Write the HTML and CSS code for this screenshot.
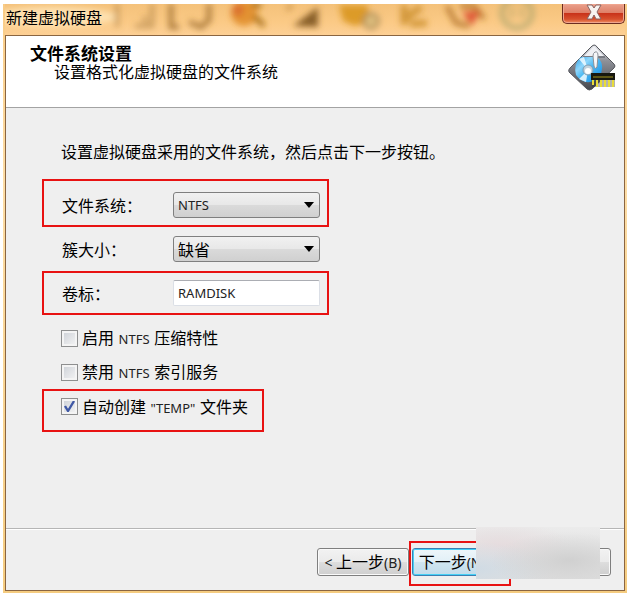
FILE: index.html
```html
<!DOCTYPE html>
<html lang="zh-CN">
<head>
<meta charset="utf-8">
<title>新建虚拟硬盘</title>
<link rel="stylesheet" href="styles.css">
</head>
<body>
<main class="window">
  <header class="titlebar">
    <svg class="glass" width="540" height="31" viewBox="0 0 540 31" aria-hidden="true">
      <defs><filter id="soft" x="-10%" y="-50%" width="120%" height="200%"><feGaussianBlur stdDeviation="3"/></filter></defs>
      <g filter="url(#soft)" fill="none">
        <ellipse cx="47" cy="13" rx="64" ry="10" fill="#ffe8bd" opacity=".8"/>
        <path d="M112 0V23M140 19V12M147 0V22H130" stroke="#a2763d" stroke-width="4" opacity=".6"/>
        <path d="M166 0V23H174M204 0V16L196 23L184 18" stroke="#95652a" stroke-width="5" opacity=".75"/>
        <circle cx="239" cy="9" r="13" fill="#df8a26" opacity=".85"/><circle cx="233" cy="6" r="6" fill="#d65a29" opacity=".6"/>
        <path d="M249 12L259 22M247 0L256 2" stroke="#a66d17" stroke-width="5"/>
        <path d="M288 22L313 3V23Z" fill="#825a22" opacity=".95"/><path d="M282 6L287 1" stroke="#b98239" stroke-width="3"/>
        <path d="M334 1H363V18L350 22L338 17Z" fill="#d99620" opacity=".9"/><circle cx="366" cy="17" r="7" fill="#e3c280" stroke="#a48552" stroke-width="3"/>
        <path d="M399 1V21M400 15L416 3M405 20L422 19" stroke="#c58823" stroke-width="7" opacity=".75"/>
        <path d="M442 2L451 19L464 22M455 2H469L479 15" stroke="#ad6b22" stroke-width="5" opacity=".8"/><path d="M457 8L475 7L467 22Z" fill="#db4a2d" opacity=".9"/>
        <circle cx="512" cy="9" r="15" stroke="#a8a26b" stroke-width="5" opacity=".7"/><path d="M507 3V14M517 3V14" stroke="#a8a26b" stroke-width="3" opacity=".7"/>
      </g>
    </svg>
    <h1 class="caption">新建虚拟硬盘</h1>
    <button class="close" type="button" aria-label="关闭">
      <svg width="16" height="16" viewBox="0 0 16 16" aria-hidden="true"><path d="M1 1H6L8 4L10 1H15L11 8L15 15H10L8 11L6 15H1L5 8Z" fill="#f7f3f0" stroke="#8a6563"/></svg>
    </button>
  </header>
  <form class="client">
    <section class="banner">
      <div class="heading">
        <h2>文件系统设置</h2>
        <p>设置格式化虚拟硬盘的文件系统</p>
      </div>
      <svg class="disk" width="50" height="48" viewBox="0 0 50 48" aria-hidden="true">
        <defs>
          <linearGradient id="metal" x1="0" y1="0" x2="0" y2="1"><stop offset="0" stop-color="#dfe1e6"/><stop offset=".35" stop-color="#8f9198"/><stop offset=".6" stop-color="#73757c"/><stop offset="1" stop-color="#45474d"/></linearGradient>
          <linearGradient id="disc" x1="0" y1="0" x2="1" y2="1"><stop offset="0" stop-color="#2d9ee4"/><stop offset=".3" stop-color="#8fd6fb"/><stop offset=".5" stop-color="#4bb8f2"/><stop offset="1" stop-color="#1487e0"/></linearGradient>
        </defs>
        <path d="M27 1Q29 1 30 3L47 20Q49 22 47 24L25 45Q22 47 20 45L2 28Q1 26 3 24L25 2Z" fill="url(#metal)" stroke="#55575d"/>
        <path d="M27 2L37 12H17Z" fill="#eff0f4"/><path d="M16 13H38" stroke="#4f535b"/>
        <path d="M14 13H30Q36 18 35 25Q34 34 27 37Q16 41 9 31Q6 20 14 13Z" fill="url(#disc)"/>
        <path d="M12 15L21 26L17 13ZM12 35L21 26L19 38Z" fill="#effaff" opacity=".85"/>
        <circle cx="21" cy="26" r="5" fill="#c3d3dd" stroke="#7f9eb4"/><circle cx="21" cy="27" r="3" fill="#fff"/>
        <path d="M28 8Q31 7 31 12L30 23Q28 26 27 22L26 12Q26 9 28 8Z" fill="#f5f6f8" stroke="#8b9199"/>
        <path d="M24 33H48V43H25Z" fill="#29291f" opacity=".35"/>
        <path d="M24 29H48V36H24Z" fill="#17170f"/><path d="M26 33H46" stroke="#a3951d"/>
        <path d="M26 36V41M30 36V43M34 36V43M38 36V43M42 36V43M46 36V43" stroke="#e8dc39" stroke-width="2"/>
      </svg>
    </section>
    <section class="content">
      <p class="intro">设置虚拟硬盘采用的文件系统，然后点击下一步按钮。</p>
      <div class="row tall marked">
        <label for="fs">文件系统：</label>
        <select id="fs" class="field combo"><option>NTFS</option></select>
      </div>
      <div class="row">
        <label for="cluster">簇大小：</label>
        <select id="cluster" class="field combo chinese"><option>缺省</option></select>
      </div>
      <div class="row marked">
        <label for="volume">卷标：</label>
        <input id="volume" class="field" type="text" value="RAMDISK">
      </div>
      <div class="checks">
        <label class="check"><input type="checkbox"><span>启用 <small>NTFS</small> 压缩特性</span></label>
        <label class="check"><input type="checkbox"><span>禁用 <small>NTFS</small> 索引服务</span></label>
        <label class="check marked"><input type="checkbox" checked><span>自动创建 <small>"TEMP"</small> 文件夹</span></label>
      </div>
    </section>
    <footer class="actions">
      <button class="button" type="button"><small>&lt;</small> 上一步<small>(B)</small></button>
      <div class="frame"><button class="button primary" type="button">下一步<small>(N)</small> <small>&gt;</small></button></div>
      <button class="button last" type="button" aria-label="取消"></button>
      <div class="veil"></div>
    </footer>
  </form>
</main>
</body>
</html>
```
FILE: styles.css
```css
* { box-sizing: border-box; }
body {
  margin: 0;
  padding: 4px 3px 3px;
  height: 100vh;
  background: #fff;
  color: #000;
  font: 16px/20px "Noto Sans CJK SC", sans-serif;
}
h1, h2, p { margin: 0; }
button, input, select { font: inherit; color: inherit; }
small { font: 13px/20px "Noto Sans", sans-serif; color: #222; }

.window {
  display: flex;
  flex-direction: column;
  height: 100%;
  padding: 0 2px 2px;
  background: linear-gradient(#f9cb85, #fddda6 30%, #f5cc80);
}
.titlebar {
  position: relative;
  display: flex;
  justify-content: space-between;
  align-items: flex-start;
  height: 31px;
  overflow: hidden;
  background: linear-gradient(#f4c17a, #fbca86 60%, #fdd095);
}
.glass { position: absolute; top: 0; left: 0; }
.caption {
  position: relative;
  padding: 3px 1px;
  font-size: 16px;
  line-height: 20px;
  font-weight: 400;
}
.close {
  position: relative;
  display: flex;
  justify-content: center;
  width: 63px;
  height: 20px;
  padding: 0;
  border: 1px solid #6b2c20;
  border-top: 0;
  border-radius: 0 0 5px 5px;
  background: linear-gradient(#e9a08c, #df8068 45%, #c9331a 50%, #d7502d 80%, #ee9064);
  box-shadow: inset 0 0 0 1px #f0a58e;
}

.client {
  flex: 1;
  display: flex;
  flex-direction: column;
  margin: 0;
  border: 1px solid #8a6541;
  background: #efefef;
}
.banner {
  display: flex;
  justify-content: space-between;
  height: 72px;
  padding: 8px 7px 0 24px;
  border-bottom: 1px solid #a3a3a3;
  background: #fff;
}
.heading h2 { font-size: 17px; line-height: 18px; }
.heading p { padding-left: 24px; line-height: 18px; }

.content { flex: 1; padding: 33px 36px 0; }
.intro { padding-left: 19px; margin-bottom: 18px; }
.row {
  display: flex;
  align-items: center;
  width: 287px;
  height: 44px;
  padding: 0 6px 0 18px;
  border: 2px solid transparent;
}
.row.tall { height: 48px; padding-top: 4px; }
.row label { width: 111px; }
.row.marked, .check.marked { border-color: #e81212; }
.field {
  width: 147px;
  height: 26px;
  padding: 0 4px;
  border: 1px solid #dbdfe6;
  border-top-color: #abadb3;
  border-radius: 2px;
  background: #fff;
  color: #222;
  font: 13px/20px "Noto Sans", sans-serif;
}
.combo {
  appearance: none;
  border-color: #7f7f7f;
  border-radius: 3px;
  background:
    url("data:image/svg+xml,%3Csvg xmlns='http://www.w3.org/2000/svg' width='10' height='6'%3E%3Cpath d='M0 0H10L5 6Z'/%3E%3C/svg%3E") right 5px center no-repeat,
    linear-gradient(#f1f1f1, #e8e8e8 48%, #dadada 52%, #d0d0d0);
}
.chinese { color: #000; font: 16px/20px "Noto Sans CJK SC", sans-serif; }

.checks {
  display: flex;
  flex-direction: column;
  align-items: flex-start;
  padding-top: 6px;
}
.check {
  display: flex;
  align-items: center;
  gap: 4px;
  height: 34px;
  padding: 0 14px 0 17px;
  border: 2px solid transparent;
}
.check small { margin: 0 1px; }
.check.marked {
  height: 43px;
  padding-bottom: 8px;
}
.check input {
  appearance: none;
  width: 17px;
  height: 17px;
  margin: 0;
  border: 1px solid #8e8f8f;
  background: linear-gradient(135deg, #cbcfd5, #f6f6f6);
  box-shadow: inset 0 0 0 2px #f4f4f4;
}
.check input:checked {
  background: url("data:image/svg+xml,%3Csvg xmlns='http://www.w3.org/2000/svg' width='15' height='15'%3E%3Cpath d='M3 7L6 12L12 2' fill='none' stroke='%233f58a5' stroke-width='2.4'/%3E%3C/svg%3E") center no-repeat, linear-gradient(135deg, #cbcfd5, #f6f6f6);
}

.actions {
  position: relative;
  display: flex;
  align-items: flex-start;
  justify-content: flex-end;
  height: 62px;
  padding: 12px 13px 0;
  border-top: 1px solid #b5b5b5;
  box-shadow: inset 0 1px #fff;
}
.button {
  width: 92px;
  height: 28px;
  padding: 0 4px;
  border: 1px solid #7f7f7f;
  border-radius: 3px;
  background: linear-gradient(#f2f2f2, #ebebeb 48%, #dddddd 52%, #cfcfcf);
  box-shadow: inset 0 0 0 1px #fafafa;
  line-height: 20px;
  white-space: nowrap;
}
.actions > .button { margin-top: 7px; }
.button small { font-size: 14px; }
.frame {
  width: 102px;
  height: 45px;
  padding: 5px 0 0 1px;
  border: 2px solid #e81212;
}
.primary {
  border-color: #3c7fb1;
  background: linear-gradient(#eef6fa, #e2f0f7 48%, #cfe5f0 52%, #c2dcea);
  box-shadow: inset 0 0 0 1px #45d0f5;
}
.last { margin-left: 8px; }
.veil {
  position: absolute;
  top: -2px;
  right: 24px;
  width: 124px;
  height: 52px;
  background:
    radial-gradient(ellipse at 75% 65%, #d0d0d0, #d0d0d000 60%),
    radial-gradient(ellipse at 0 80%, #d0dbe4, #d0dbe400 45%),
    radial-gradient(ellipse at 20% 35%, #e6dcde, #e6dcde00 50%),
    linear-gradient(#ebebeb, #dfdfdf);
}
```
